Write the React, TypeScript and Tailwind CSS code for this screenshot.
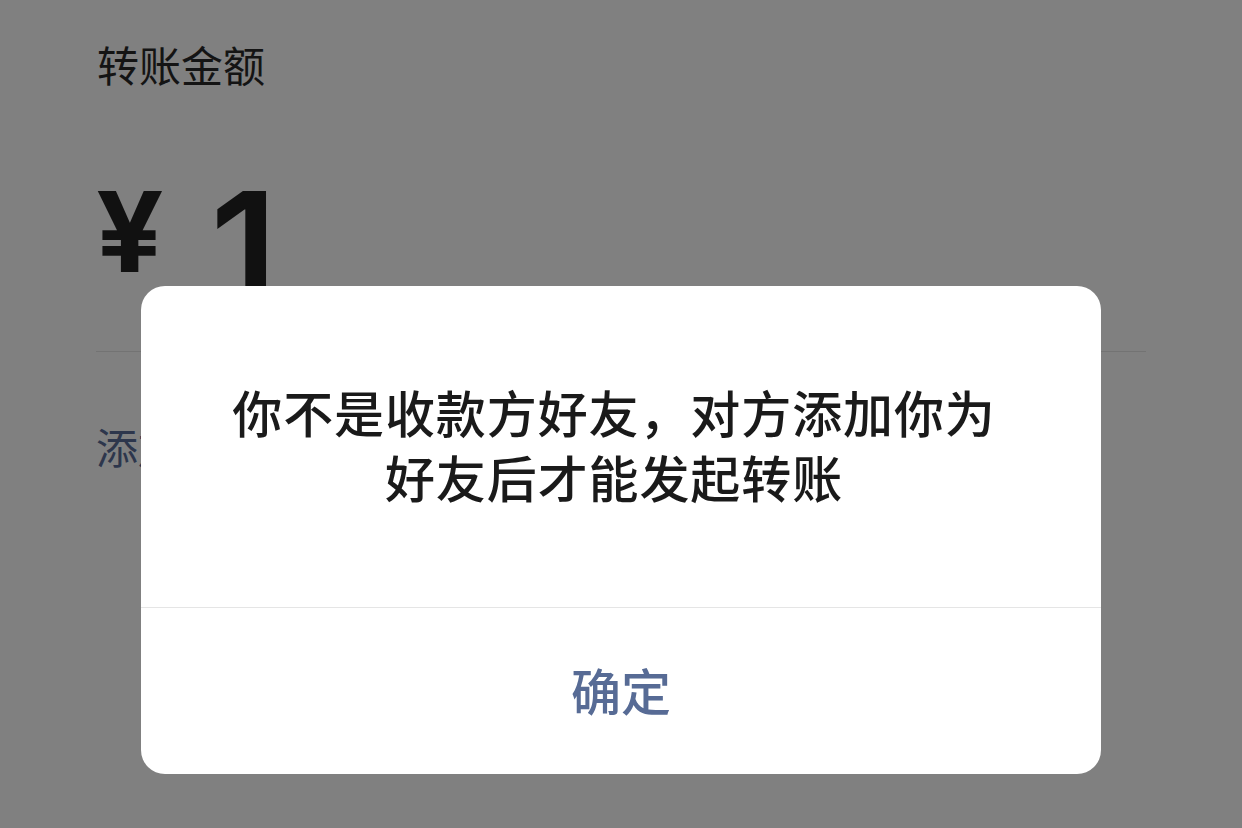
import React from 'react';

const cjk = { fontFamily: '"Noto Sans CJK SC", "Noto Sans", sans-serif' };
const num = { fontFamily: 'Inter, "Liberation Sans", sans-serif' };

export default function App() {
  return (
    <div className="relative w-[1242px] h-[828px] overflow-hidden bg-[#808080]" style={cjk}>
      {/* underlying transfer page, dimmed */}
      <div className="flex flex-col px-[96px] pt-[36px]">
        <div className="text-[42px] leading-[56px] text-[#141414] pl-px">转账金额</div>
        <div className="flex items-center gap-[50px] h-[190px] text-[#111111] mt-[42px]" style={num}>
          <span className="text-[112px] leading-none pt-[4px] font-bold scale-x-[1.06] origin-left">¥</span>
          <span className="text-[160px] leading-none pt-[40px] font-semibold">1</span>
        </div>
        <div className="w-[1050px] h-px bg-[#737373] mt-[27px]" />
        <div className="mt-[66px] text-[42px] leading-[56px] text-[#2d364c]">添加</div>
      </div>

      {/* alert dialog */}
      <div className="absolute left-[141px] top-[286px] w-[960px] h-[488px] bg-white rounded-[24px] flex flex-col">
        <div className="h-[321px] flex items-center justify-center pl-[60px] pr-[74px] pb-[6px]">
          <p className="text-center text-[50px] leading-[65px] font-medium text-[#1a1a1a] tracking-[0.9px]">
            你不是收款方好友，对方添加你为
            <br />
            好友后才能发起转账
          </p>
        </div>
        <div className="h-px bg-[#e5e5e5]" />
        <div className="flex-1 flex items-center justify-center pb-[4px]">
          <span className="text-[50px] font-medium text-[#576b95]">确定</span>
        </div>
      </div>
    </div>
  );
}
